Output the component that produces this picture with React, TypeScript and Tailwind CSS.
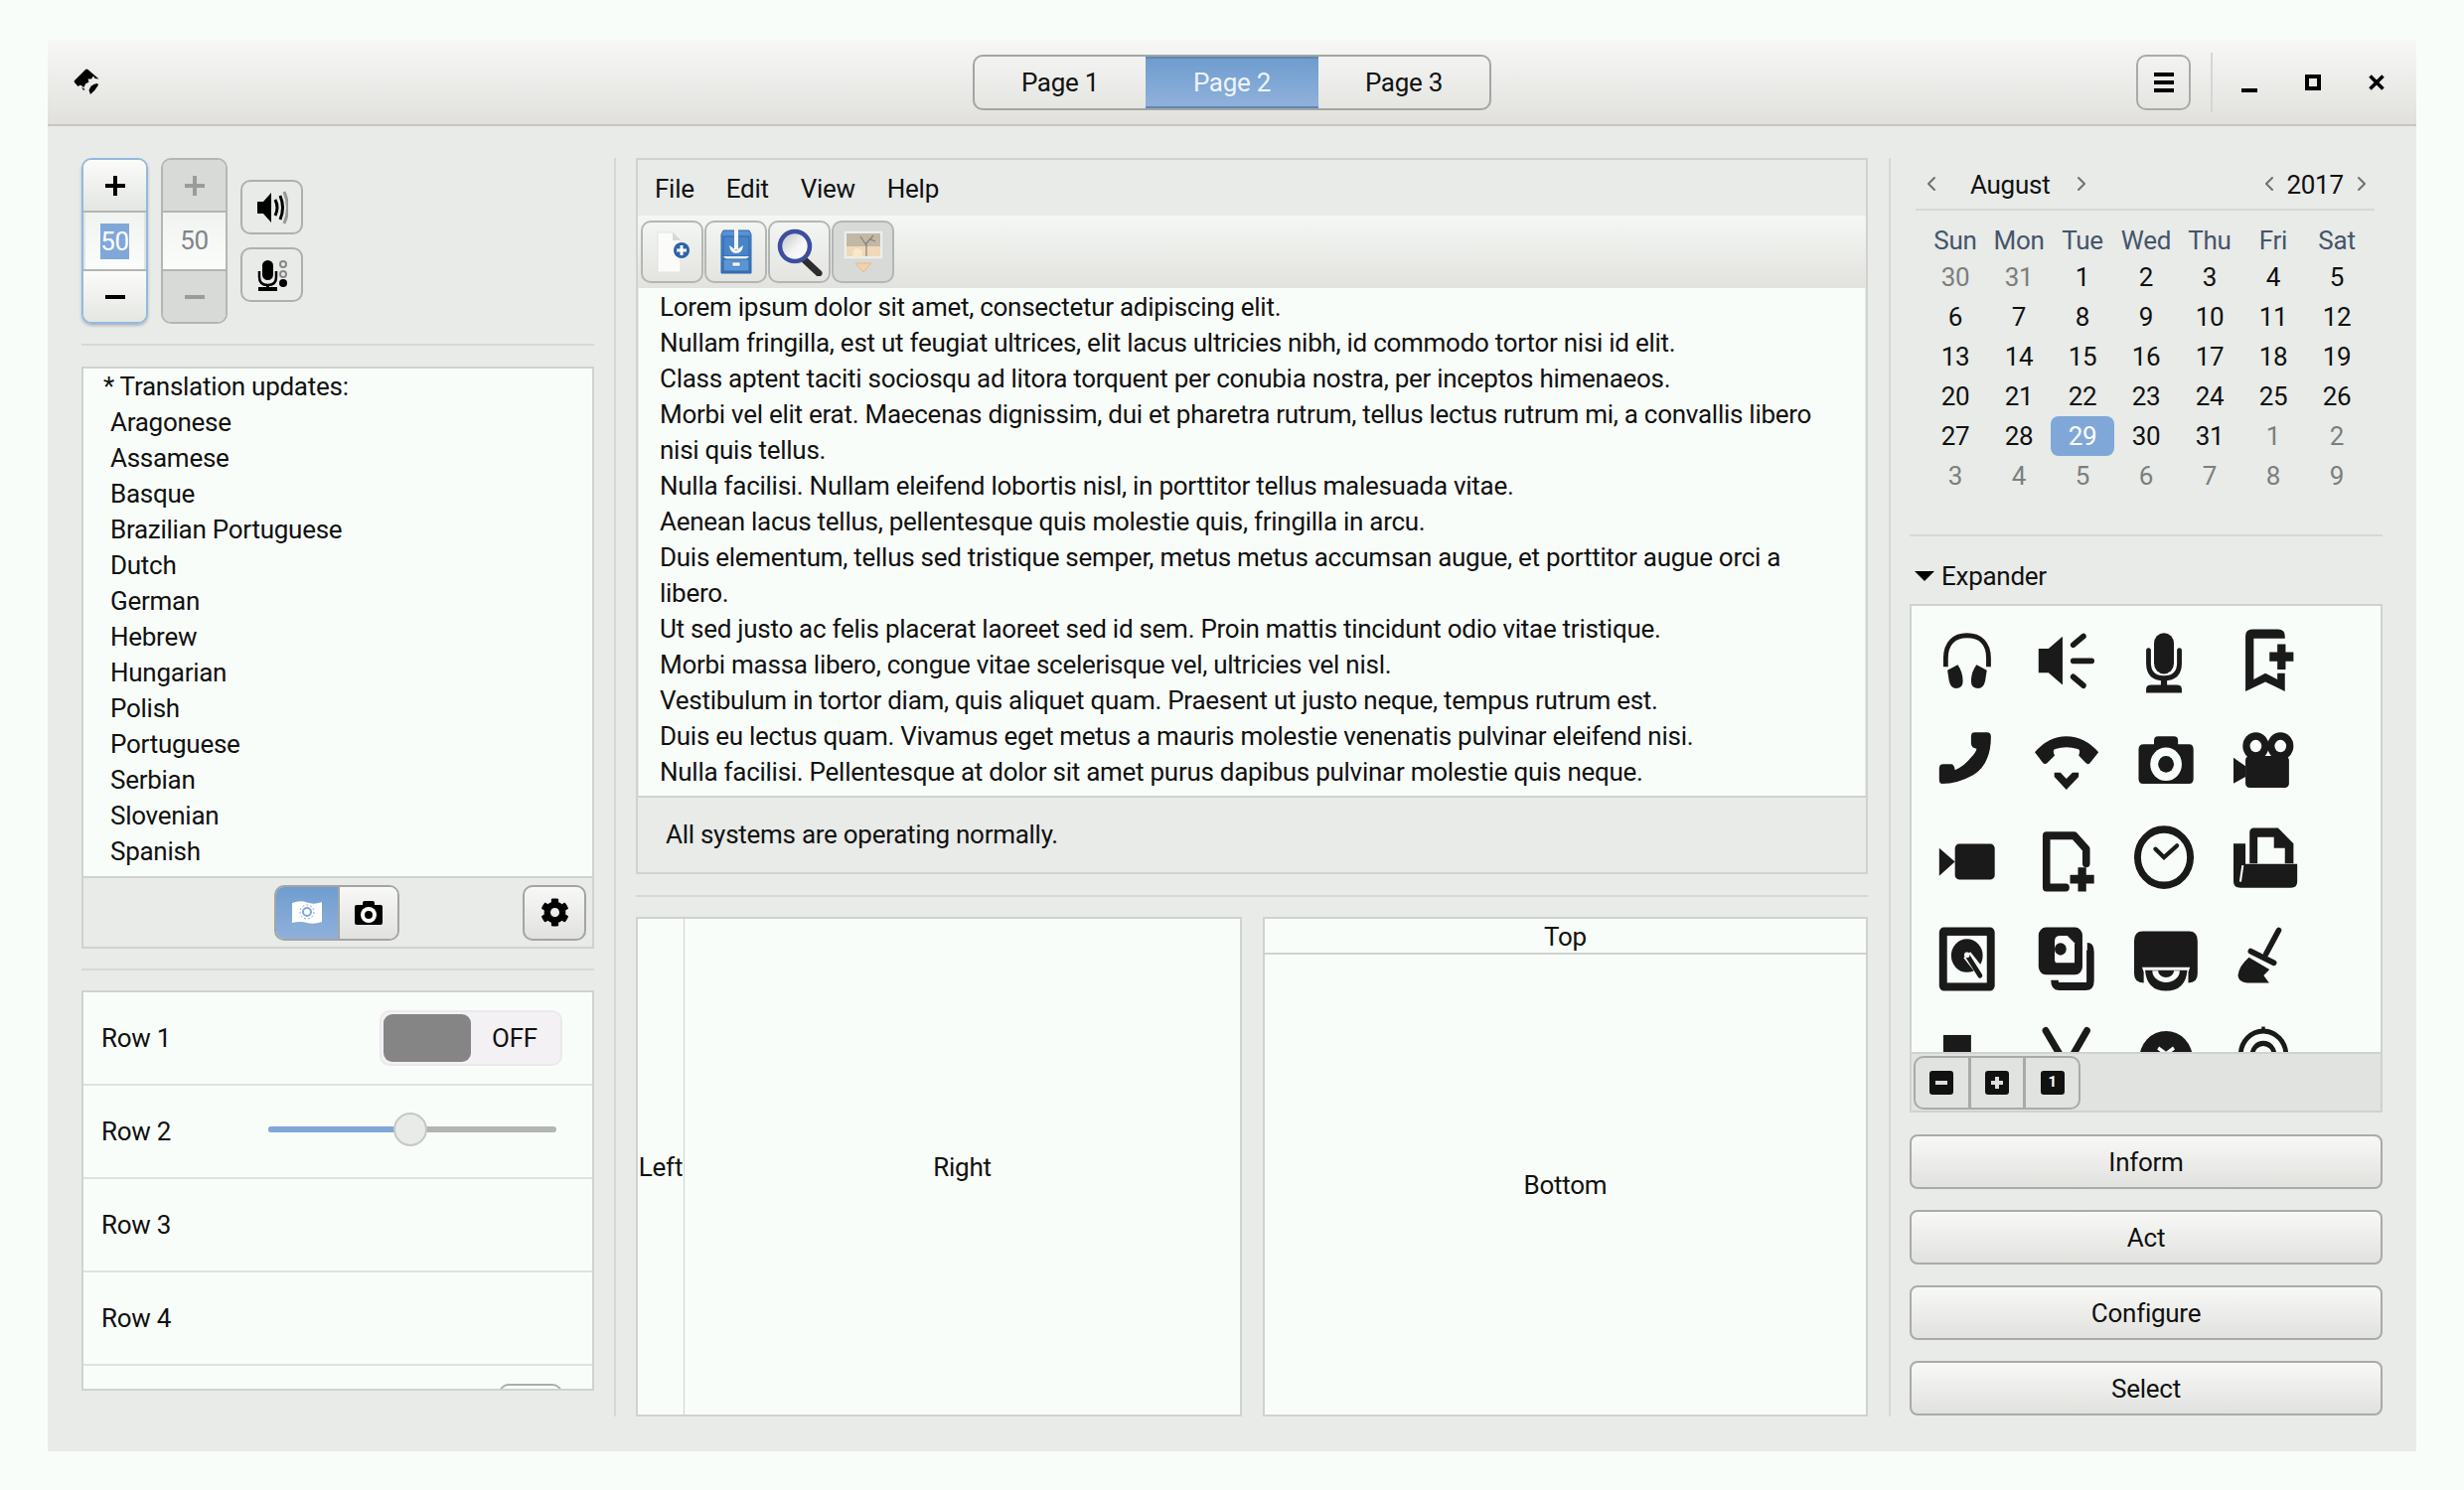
import React from 'react';
import { ChevronLeft, ChevronRight } from 'lucide-react';
import { FaCog } from 'react-icons/fa';

const languages = [
  'Aragonese', 'Assamese', 'Basque', 'Brazilian Portuguese', 'Dutch', 'German', 'Hebrew',
  'Hungarian', 'Polish', 'Portuguese', 'Serbian', 'Slovenian', 'Spanish',
];

const paragraphs = [
  'Lorem ipsum dolor sit amet, consectetur adipiscing elit.',
  'Nullam fringilla, est ut feugiat ultrices, elit lacus ultricies nibh, id commodo tortor nisi id elit.',
  'Class aptent taciti sociosqu ad litora torquent per conubia nostra, per inceptos himenaeos.',
  'Morbi vel elit erat. Maecenas dignissim, dui et pharetra rutrum, tellus lectus rutrum mi, a convallis libero nisi quis tellus.',
  'Nulla facilisi. Nullam eleifend lobortis nisl, in porttitor tellus malesuada vitae.',
  'Aenean lacus tellus, pellentesque quis molestie quis, fringilla in arcu.',
  'Duis elementum, tellus sed tristique semper, metus metus accumsan augue, et porttitor augue orci a libero.',
  'Ut sed justo ac felis placerat laoreet sed id sem. Proin mattis tincidunt odio vitae tristique.',
  'Morbi massa libero, congue vitae scelerisque vel, ultricies vel nisl.',
  'Vestibulum in tortor diam, quis aliquet quam. Praesent ut justo neque, tempus rutrum est.',
  'Duis eu lectus quam. Vivamus eget metus a mauris molestie venenatis pulvinar eleifend nisi.',
  'Nulla facilisi. Pellentesque at dolor sit amet purus dapibus pulvinar molestie quis neque.',
];

const weekdays = ['Sun', 'Mon', 'Tue', 'Wed', 'Thu', 'Fri', 'Sat'];

const days: [string, boolean][] = [
  ['30', true], ['31', true], ['1', false], ['2', false], ['3', false], ['4', false], ['5', false],
  ['6', false], ['7', false], ['8', false], ['9', false], ['10', false], ['11', false], ['12', false],
  ['13', false], ['14', false], ['15', false], ['16', false], ['17', false], ['18', false], ['19', false],
  ['20', false], ['21', false], ['22', false], ['23', false], ['24', false], ['25', false], ['26', false],
  ['27', false], ['28', false], ['29', false], ['30', false], ['31', false], ['1', true], ['2', true],
  ['3', true], ['4', true], ['5', true], ['6', true], ['7', true], ['8', true], ['9', true],
];

const INK = '#1a1a1a';
const PAPER = '#f9fdf9';

// drawn in the coordinates of the icon sheet, each cell is a 200 unit window
const sheet: [number, number, React.ReactNode][] = [
  [140, 200, <>
    <path d="M170 310V287C170 245 195 224 232 224C270 224 295 245 295 287V310" fill="none" stroke={INK} strokeWidth="14" />
    <path d="M175 320L205 305Q220 325 220 350Q220 370 200 370Q185 370 180 350Z" fill={INK} />
    <path d="M290 320L260 305Q244 325 244 350Q244 370 265 370Q280 370 285 350Z" fill={INK} />
  </>],
  [430, 200, <>
    <path d="M441 260H470L511 227V360L470 327H441Z" fill={INK} />
    <path d="M542 250L572 226M542 294H596M542 338L572 362" stroke={INK} strokeWidth="16" strokeLinecap="round" />
  </>],
  [720, 200, <>
    <rect x="778" y="217" width="58" height="113" rx="29" fill={INK} />
    <path d="M762 265V300Q762 342 807 342Q852 342 852 300V265" fill="none" stroke={INK} strokeWidth="14" strokeLinecap="round" />
    <rect x="798" y="342" width="18" height="20" fill={INK} />
    <path d="M755 382V372Q755 360 770 360H844Q859 360 859 372V382Z" fill={INK} />
  </>],
  [1010, 200, <>
    <path d="M1160 240V225Q1160 207 1140 207H1065Q1045 207 1045 225V378L1103 352L1160 378V328H1138V345L1103 328L1069 345V232H1160Z" fill={INK} />
    <path d="M1115 270H1138V248H1162V270H1185V295H1162V318H1138V295H1115Z" fill={INK} />
  </>],
  [140, 475, <path d="M255 492H290Q302 492 302 504Q302 580 250 610Q205 634 160 634Q151 634 151 622V592Q151 580 163 580H185Q195 580 197 596Q225 585 245 560Q260 545 260 537Q244 535 244 522V504Q244 492 255 492Z" fill={INK} />],
  [430, 475, <>
    <path d="M430 547Q470 503 522 503Q575 503 616 547L590 578Q585 582 578 576L558 556Q565 540 555 538Q522 528 490 538Q480 540 488 556L465 578Q458 582 452 574Z" fill={INK} />
    <path d="M487 603H505L522 620L540 603H558V615L522 650L487 615Z" fill={INK} />
  </>],
  [720, 475, <>
    <path d="M733 540Q733 525 748 525H778V515Q778 503 790 503H836Q848 503 848 515V525H880Q893 525 893 540V620Q893 634 880 634H746Q733 634 733 620Z" fill={INK} />
    <circle cx="813" cy="580" r="46" fill={PAPER} />
    <circle cx="813" cy="580" r="23" fill={INK} />
  </>],
  [1010, 475, <>
    <circle cx="1075" cy="530" r="38" fill={INK} />
    <circle cx="1147" cy="530" r="38" fill={INK} />
    <circle cx="1075" cy="530" r="17" fill={PAPER} />
    <circle cx="1147" cy="530" r="17" fill={PAPER} />
    <rect x="1045" y="557" width="127" height="88" rx="12" fill={INK} />
    <path d="M1010 562L1045 585V615L1010 633Z" fill={INK} />
  </>],
  [140, 750, <>
    <rect x="197" y="801" width="116" height="98" rx="12" fill={INK} />
    <path d="M151 812L197 850L151 889Z" fill={INK} />
  </>],
  [430, 750, <>
    <path d="M520 921H464V778H545L580 815V855" fill="none" stroke={INK} strokeWidth="22" strokeLinejoin="round" strokeLinecap="round" />
    <path d="M533 886H556V866H580V886H603V910H580V932H556V910H533Z" fill={INK} />
  </>],
  [720, 750, <>
    <circle cx="807" cy="838" r="77" fill="none" stroke={INK} strokeWidth="20" />
    <path d="M782 815L807 838L845 806" fill="none" stroke={INK} strokeWidth="12" strokeLinecap="round" />
  </>],
  [1010, 750, <>
    <path d="M1057 770Q1057 757 1070 757H1140L1185 800V855H1160V812H1128V782H1080V855H1057Z" fill={INK} />
    <path d="M1010 800H1045V856H1196V905Q1196 922 1178 922H1030Q1010 922 1010 905Z" fill={INK} />
    <path d="M1037 860L1030 905" stroke={PAPER} strokeWidth="6" />
  </>],
  [140, 1025, <>
    <rect x="151" y="1032" width="162" height="175" rx="14" fill={INK} />
    <rect x="174" y="1055" width="116" height="130" fill={PAPER} />
    <circle cx="232" cy="1110" r="46" fill={INK} />
    <path d="M232 1108L280 1165" stroke={PAPER} strokeWidth="26" />
    <path d="M232 1108L270 1165" stroke={INK} strokeWidth="14" strokeLinecap="round" />
    <circle cx="232" cy="1108" r="8" fill={PAPER} />
  </>],
  [430, 1025, <>
    <rect x="441" y="1032" width="128" height="131" rx="22" fill={INK} />
    <path d="M488 1070Q488 1055 505 1055H525L546 1075V1130H495Q488 1130 488 1120Z" fill={PAPER} />
    <circle cx="505" cy="1092" r="17" fill={INK} />
    <path d="M583 1085Q592 1085 592 1100V1180Q592 1195 578 1195H500Q488 1195 488 1178" fill="none" stroke={INK} strokeWidth="22" />
  </>],
  [720, 1025, <>
    <path d="M745 1043H880Q905 1043 905 1070V1160Q905 1185 878 1185V1155L883 1142H743L748 1155V1185Q720 1185 720 1160V1070Q720 1043 745 1043Z" fill={INK} />
    <path d="M752 1150H875Q870 1207 813 1207Q757 1207 752 1150Z" fill={INK} />
    <path d="M773 1152A40 32 0 0 0 853 1152H836A23 18 0 0 1 790 1152Z" fill={PAPER} />
  </>],
  [1010, 1025, <>
    <path d="M1142 1040L1105 1105" stroke={INK} strokeWidth="16" strokeLinecap="round" />
    <path d="M1060 1098L1128 1130" stroke={INK} strokeWidth="16" strokeLinecap="round" />
    <path d="M1055 1115L1115 1148L1098 1165L1114 1185H1050Q1025 1185 1023 1165Q1025 1140 1055 1115Z" fill={INK} />
  </>],
  [140, 1300, <rect x="163" y="1330" width="81" height="100" fill={INK} />],
  [430, 1300, <path d="M462 1318L510 1395M582 1318L535 1395" stroke={INK} strokeWidth="20" strokeLinecap="round" />],
  [720, 1300, <>
    <circle cx="813" cy="1397" r="78" fill={INK} />
    <path d="M790 1366L813 1382L836 1366" fill="none" stroke={PAPER} strokeWidth="10" />
  </>],
  [1010, 1300, <>
    <circle cx="1097" cy="1385" r="66" fill="none" stroke={INK} strokeWidth="14" />
    <circle cx="1097" cy="1385" r="32" fill="none" stroke={INK} strokeWidth="14" />
    <rect x="1092" y="1307" width="10" height="15" fill={INK} />
  </>],
];

const Logo = () => (
  <svg viewBox="0 0 26 27" className="w-[26px] h-[27px]">
    <path d="M12 1Q13 0 14.5 1L25.5 10.5L21.5 10L20 7.5L18 10.5L14.5 10.5L15.5 13.5L12 15.5L10.5 19L7 16.5L4.5 18L1 14Q0 13 1 12Z" fill="#000" />
    <path d="M15.5 22Q17 16 24 15L25 16.5Q22 22 17 26Z" fill="#000" />
    <path d="M8 18.5L11.5 21L10 22Z" fill="#000" />
  </svg>
);

const SpeakerIcon = () => (
  <svg viewBox="0 0 32 34" className="w-[32px] h-[34px]">
    <path d="M1 11H7L15 2V32L7 23H1Z" fill="#000" />
    <path d="M19 9Q23 17 19 25" fill="none" stroke="#000" strokeWidth="3" />
    <path d="M24 5Q29 17 24 29" fill="none" stroke="#000" strokeWidth="3" />
    <path d="M28 1Q35 17 28 33" fill="none" stroke="#999" strokeWidth="3" />
  </svg>
);

const MicIcon = () => (
  <svg viewBox="0 0 32 32" className="w-[32px] h-[32px]">
    <rect x="6" y="1" width="11" height="20" rx="5.5" fill="#000" />
    <path d="M3 12V18Q3 26 11.5 26Q20 26 20 18V12" fill="none" stroke="#000" strokeWidth="2.5" />
    <rect x="10" y="26" width="3" height="3" fill="#000" />
    <rect x="2" y="28" width="19" height="4" fill="#000" />
    <circle cx="27" cy="5" r="3" fill="none" stroke="#888" strokeWidth="2" />
    <circle cx="27" cy="15" r="3" fill="none" stroke="#888" strokeWidth="2" />
    <circle cx="27" cy="24" r="4" fill="#000" />
  </svg>
);

const SmallCamera = () => (
  <svg viewBox="0 0 28 24" className="w-[28px] h-[24px]">
    <path d="M0 6Q0 4 2 4H8V2Q8 0 10 0H18Q20 0 20 2V4H26Q28 4 28 6V22Q28 24 26 24H2Q0 24 0 22Z" fill="#000" />
    <circle cx="14" cy="14" r="8" fill="#fff" />
    <circle cx="14" cy="14" r="4" fill="#000" />
  </svg>
);

const FlagIcon = () => (
  <svg viewBox="0 0 30 24" className="w-[30px] h-[24px]">
    <path d="M0 2Q8 -1 15 1.5T30 1V21Q22 24 15 22T0 22Z" fill="#fff" />
    <circle cx="15" cy="11" r="4" fill="none" stroke="#7fa8d9" strokeWidth="2" />
    <circle cx="15" cy="11" r="7" fill="none" stroke="#7fa8d9" strokeWidth="1" strokeDasharray="2 2" />
  </svg>
);

const NewDocIcon = () => (
  <svg viewBox="0 0 40 44" className="w-[40px] h-[44px]">
    <path d="M5 2H20L28 10V42H5Z" fill="#fbfcfa" stroke="#e2e3e0" />
    <path d="M20 2V10H28Z" fill="#d6d8d6" />
    <circle cx="29" cy="20" r="8" fill="#2f62a6" />
    <path d="M29 15V25M24 20H34" stroke="#fff" strokeWidth="3" />
  </svg>
);

const CabinetIcon = () => (
  <svg viewBox="0 0 34 46" className="w-[34px] h-[46px]">
    <defs>
      <linearGradient id="cab" x1="0" y1="0" x2="0" y2="1">
        <stop offset="0" stopColor="#5b93d3" />
        <stop offset="1" stopColor="#3a76bd" />
      </linearGradient>
    </defs>
    <path d="M4 1H30L32 5V44H2V5Z" fill="url(#cab)" stroke="#2f66a8" />
    <rect x="4" y="7" width="26" height="20" fill="#4a84c8" stroke="#2f66a8" />
    <path d="M4 27H30L27 30H7Z" fill="#e8edf3" />
    <rect x="4" y="30" width="26" height="12" fill="#5c95d4" stroke="#2f66a8" />
    <rect x="13" y="33" width="8" height="4" fill="#eef3f8" stroke="#2f66a8" strokeWidth="0.5" />
    <path d="M17 0V20" stroke="#f4f6f4" strokeWidth="4" />
    <path d="M10 16Q11 24 17 24Q23 24 24 16L17 21Z" fill="#f4f6f4" />
  </svg>
);

const SearchIcon = () => (
  <svg viewBox="0 0 48 48" className="w-[48px] h-[48px]">
    <defs>
      <linearGradient id="lens" x1="0" y1="0" x2="1" y2="1">
        <stop offset="0" stopColor="#b9bcc0" />
        <stop offset="0.55" stopColor="#f4f6f6" />
        <stop offset="1" stopColor="#ffffff" />
      </linearGradient>
    </defs>
    <path d="M28 31L43 45" stroke="#2e2e30" strokeWidth="7" strokeLinecap="round" />
    <circle cx="19" cy="18" r="15" fill="url(#lens)" stroke="#3d4ea0" strokeWidth="4.5" />
  </svg>
);

const PictureIcon = () => (
  <svg viewBox="0 0 42 46" className="w-[42px] h-[46px]">
    <rect x="1" y="1" width="40" height="29" rx="1" fill="#eceeeb" stroke="#d2d4d1" />
    <rect x="4" y="4" width="34" height="23" fill="#c3b7a6" />
    <path d="M4 17H38V27H4Z" fill="#efd9b9" />
    <circle cx="15" cy="24" r="5" fill="#f8e8c9" />
    <path d="M24 27V13M24 16L18 7M24 14L31 6M28 10L33 12" fill="none" stroke="#85807a" strokeWidth="1.2" />
    <path d="M13 34H29L21 43Z" fill="#f2d2aa" stroke="#e7b98a" />
  </svg>
);

const Hr = ({ className = '' }: { className?: string }) => (
  <div className={`h-[2px] bg-[#d5d8d5] ${className}`} />
);

const VSep = () => <div className="w-[2px] h-[1267px] bg-[#d5d8d5]" />;

const Spin = ({ active }: { active: boolean }) => {
  const edge = active ? 'border-[#95b8de]' : 'border-[#b4b6b4]';
  const btn = active
    ? 'bg-linear-to-b from-[#fbfcfa] to-[#e4e6e2] text-black'
    : 'bg-[#d8dad8] text-[#9a9c9a]';
  return (
    <div className={`w-[67px] h-[167px] flex flex-col rounded-[10px] border-2 overflow-hidden ${edge} ${active ? 'shadow-[0_2px_3px_rgba(60,90,130,0.35)]' : ''}`}>
      <div className={`h-[53px] flex items-center justify-center border-b-2 border-[#b4b6b4] ${btn}`}>
        <svg viewBox="0 0 20 20" className="w-[20px] h-[20px]"><path d="M8 0H12V8H20V12H12V20H8V12H0V8H8Z" fill="currentColor" /></svg>
      </div>
      <div className={`flex-1 flex items-center justify-center bg-linear-to-b from-[#f1f3f0] to-[#fbfdfb] ${active ? 'border-x-2 border-[#e2e4e2]' : 'text-[#80858a]'}`}>
        {active ? <span className="bg-[#7fa8d9] text-white h-[36px] leading-[36px]">50</span> : <span>50</span>}
      </div>
      <div className={`h-[53px] flex items-center justify-center border-t-2 border-[#b4b6b4] ${btn}`}>
        <div className="w-[20px] h-[4px] bg-current" />
      </div>
    </div>
  );
};

const IconButton = ({ children }: { children: React.ReactNode }) => (
  <div className="w-[63px] h-[55px] flex items-center justify-center rounded-[10px] border-2 border-[#aeb0ae] bg-[#e8ebe8]">
    {children}
  </div>
);

const ToolButton = ({ children, disabled }: { children: React.ReactNode; disabled?: boolean }) => (
  <div className={`w-[63px] h-[63px] flex items-center justify-center rounded-[10px] border-2 border-[#b4b6b4] ${disabled ? 'bg-[#d8dad7]' : ''}`}>
    {children}
  </div>
);

const PageTab = ({ label, active }: { label: string; active?: boolean }) => (
  <div className={`h-full flex items-center justify-center pt-[1px] ${active ? 'w-[174px] bg-linear-to-b from-[#6f9dcf] to-[#8fb1da] border-y-2 border-[#5f87b5] text-[#eef4fb]' : 'w-[172px]'}`}>
    {label}
  </div>
);

const Row = ({ label, children }: { label: string; children?: React.ReactNode }) => (
  <div className="h-[94px] shrink-0 flex items-center justify-between pl-[18px] border-b-2 border-[#dfe2df]">
    <span>{label}</span>
    {children}
  </div>
);

const WideButton = ({ label }: { label: string }) => (
  <div className="h-[55px] flex items-center justify-center pt-[1px] rounded-[8px] border-2 border-[#a9aba9] bg-linear-to-b from-[#f8f9f7] to-[#e1e2de]">
    {label}
  </div>
);

const BoxGlyph = ({ children }: { children: React.ReactNode }) => (
  <div className="w-[24px] h-[24px] rounded-[3px] bg-[#111] flex items-center justify-center text-white">
    {children}
  </div>
);

const App: React.FC = () => {
  return (
    <div className="w-[2480px] h-[1500px] bg-[#f9fdf9] pt-[40px] pl-[48px] font-[Roboto,sans-serif] text-[26px] text-[#111] tracking-[-0.27px] overflow-hidden">
      <div className="w-[2384px] h-[1421px] bg-[#e8ebe8] flex flex-col">
        {/* title bar */}
        <header className="h-[87px] shrink-0 grid grid-cols-[1fr_auto_1fr] items-center border-b-2 border-[#c9c6c2] bg-linear-to-b from-[#f7f7f6] via-[#ecedea] to-[#e1e0dc]">
          <div className="pl-[26px]"><Logo /></div>
          <div className="w-[522px] h-[56px] flex rounded-[10px] border-2 border-[#a3a5a3] overflow-hidden">
            <PageTab label="Page 1" />
            <PageTab label="Page 2" active />
            <PageTab label="Page 3" />
          </div>
          <div className="flex items-center justify-end pr-[32px]">
            <div className="w-[55px] h-[56px] flex items-center justify-center rounded-[10px] border-2 border-[#a9aba9]">
              <div className="w-[20px] flex flex-col gap-[4px]">
                <div className="h-[4px] bg-black" />
                <div className="h-[4px] bg-black" />
                <div className="h-[4px] bg-black" />
              </div>
            </div>
            <div className="w-[2px] h-[60px] bg-[#d5d6d3] ml-[20px] mr-[29px]" />
            <div className="w-[16px] h-[4px] bg-black mt-[16px]" />
            <div className="w-[16px] h-[16px] border-[4px] border-black ml-[48px]" />
            <svg viewBox="0 0 16 16" className="w-[16px] h-[16px] ml-[48px]"><path d="M1.5 1.5L14.5 14.5M14.5 1.5L1.5 14.5" stroke="#000" strokeWidth="3.6" /></svg>
          </div>
        </header>

        <main className="flex pt-[32px] pl-[34px]">
          {/* left column */}
          <section className="w-[516px] flex flex-col">
            <div className="h-[167px] flex gap-[13px] items-start">
              <Spin active />
              <Spin active={false} />
              <div className="flex flex-col gap-[13px] pt-[22px]">
                <IconButton><SpeakerIcon /></IconButton>
                <IconButton><MicIcon /></IconButton>
              </div>
            </div>
            <Hr className="mt-[20px]" />
            <div className="mt-[21px] h-[586px] flex flex-col border-2 border-[#cfd2cf]">
              <div className="flex-1 bg-[#f9fdf9] leading-[36px] overflow-hidden">
                <div className="pl-[20px]">* Translation updates:</div>
                {languages.map((l) => <div key={l} className="pl-[27px]">{l}</div>)}
              </div>
              <div className="h-[71px] shrink-0 flex items-center border-t-2 border-[#cfd2cf] bg-[#e8ebe8] pl-[192px]">
                <div className="w-[126px] h-[56px] flex rounded-[10px] border-2 border-[#a3a5a3] overflow-hidden">
                  <div className="w-[62px] flex items-center justify-center bg-linear-to-b from-[#6f9dcf] to-[#8fb1da]"><FlagIcon /></div>
                  <div className="flex-1 flex items-center justify-center border-l-2 border-[#a3a5a3] bg-linear-to-b from-[#f8f9f7] to-[#e1e2de]"><SmallCamera /></div>
                </div>
                <div className="w-[64px] h-[56px] ml-[124px] flex items-center justify-center rounded-[10px] border-2 border-[#a3a5a3] bg-linear-to-b from-[#f8f9f7] to-[#e1e2de]">
                  <FaCog className="w-[29px] h-[29px] text-black" />
                </div>
              </div>
            </div>
            <Hr className="mt-[20px]" />
            <div className="mt-[20px] h-[403px] bg-[#f9fdf9] border-2 border-[#cfd2cf] flex flex-col overflow-hidden">
              <Row label="Row 1">
                <div className="w-[184px] h-[56px] mr-[30px] flex items-center rounded-[10px] border-2 border-[#ece8ec] bg-[#f3f1f3] p-[2px]">
                  <div className="w-[88px] h-[48px] rounded-[9px] bg-[#858585]" />
                  <span className="flex-1 text-center">OFF</span>
                </div>
              </Row>
              <Row label="Row 2">
                <div className="relative w-[290px] h-[6px] mr-[36px] rounded-full bg-[#b3b5b2] -mt-[4px]">
                  <div className="w-[143px] h-full rounded-full bg-[#7fa8d9]" />
                  <div className="absolute left-[126px] top-[-14px] w-[34px] h-[34px] rounded-full bg-[#e8ebe8] border-2 border-[#c6c8c6]" />
                </div>
              </Row>
              <Row label="Row 3" />
              <Row label="Row 4" />
              <div className="flex justify-end pr-[30px] pt-[18px]">
                <div className="w-[64px] h-[40px] rounded-[10px] border-2 border-[#a9aba9]" />
              </div>
            </div>
          </section>

          <div className="ml-[20px]"><VSep /></div>

          {/* center column */}
          <section className="ml-[20px] w-[1240px] flex flex-col">
            <div className="h-[721px] flex flex-col border-2 border-[#cfd2cf]">
              <nav className="h-[56px] shrink-0 flex items-center gap-[32px] pl-[17px] pt-[2px]">
                <span>File</span><span>Edit</span><span>View</span><span>Help</span>
              </nav>
              <div className="h-[73px] shrink-0 flex items-center gap-[1px] pl-[3px] bg-linear-to-b from-[#f5f7f4] to-[#e2e3df]">
                <ToolButton><NewDocIcon /></ToolButton>
                <ToolButton><CabinetIcon /></ToolButton>
                <ToolButton><SearchIcon /></ToolButton>
                <ToolButton disabled><PictureIcon /></ToolButton>
              </div>
              <div className="h-[511px] shrink-0 bg-[#f9fdf9] pl-[21px] pr-[44px] mx-[1px] pt-[1px] leading-[36px] overflow-hidden">
                {paragraphs.map((p) => <p key={p}>{p}</p>)}
              </div>
              <div className="flex-1 flex items-center pl-[28px] border-t-2 border-[#cfd2cf]">
                All systems are operating normally.
              </div>
            </div>
            <Hr className="mt-[21px]" />
            <div className="mt-[20px] h-[503px] flex gap-[21px]">
              <div className="w-[610px] flex bg-[#f9fdf9] border-2 border-[#cfd2cf]">
                <div className="w-[47px] flex items-center justify-center pt-[2px] border-r border-[#cfd2cf]">Left</div>
                <div className="flex-1 flex items-center justify-center pt-[2px]">Right</div>
              </div>
              <div className="w-[609px] flex flex-col bg-[#f9fdf9] border-2 border-[#cfd2cf]">
                <div className="h-[36px] flex items-center justify-center pt-[2px] border-b-2 border-[#cfd2cf]">Top</div>
                <div className="flex-1 flex items-center justify-center pt-[2px]">Bottom</div>
              </div>
            </div>
          </section>

          <div className="ml-[21px]"><VSep /></div>

          {/* right column */}
          <section className="ml-[19px] w-[476px] flex flex-col">
            <div className="h-[55px] flex items-center pl-[6px] pr-[8px] pb-[2px]">
              <div className="w-full h-full flex items-center pt-[3px] border-b-2 border-[#d5d8d5] text-[#6e726f]">
                <ChevronLeft className="w-[24px] h-[28px] ml-[4px] -mt-[2px]" />
                <span className="ml-[27px] text-[#111]">August</span>
                <ChevronRight className="w-[24px] h-[28px] ml-[20px] -mt-[2px]" />
                <ChevronLeft className="w-[24px] h-[28px] ml-[165px] -mt-[2px]" />
                <span className="ml-[5px] text-[#111]">2017</span>
                <ChevronRight className="w-[24px] h-[28px] ml-[6px] -mt-[2px]" />
              </div>
            </div>
            <div className="pl-[14px] pt-[9px]">
              <div className="grid grid-cols-[repeat(7,64px)] h-[36px] items-center text-center text-[#46556a]">
                {weekdays.map((d) => <span key={d}>{d}</span>)}
              </div>
              <div className="grid grid-cols-[repeat(7,64px)] auto-rows-[40px]">
                {days.map(([d, muted], i) => (
                  <div
                    key={i}
                    className={`flex items-center justify-center ${i === 30 ? 'bg-[#7fa8d9] text-white rounded-[8px]' : muted ? 'text-[#7c7f7d]' : ''}`}
                  >
                    {d}
                  </div>
                ))}
              </div>
            </div>
            <Hr className="mt-[39px]" />
            <div className="h-[68px] flex items-center gap-[7px] pl-[5px] pt-[12px]">
              <div className="w-0 h-0 border-x-[10px] border-x-transparent border-t-[10px] border-t-black" />
              <span>Expander</span>
            </div>
            <div className="h-[512px] flex flex-col border-2 border-[#cfd2cf]">
              <div className="h-[449px] shrink-0 bg-[#f9fdf9] overflow-hidden pl-[24px] pt-[21px]">
                <div className="grid grid-cols-[repeat(4,100px)] auto-rows-[100px]">
                  {sheet.map(([x, y, art], i) => (
                    <svg key={i} viewBox={`${x} ${y} 200 200`} preserveAspectRatio="none" className="w-[69px] h-[73px] overflow-visible">
                      {art}
                    </svg>
                  ))}
                </div>
              </div>
              <div className="flex-1 flex items-center pl-[2px] border-t-2 border-[#cfd2cf] bg-[#e0e3e0]">
                <div className="w-[168px] h-[54px] flex rounded-[10px] border-2 border-[#a9aba9] overflow-hidden">
                  <div className="flex-1 flex items-center justify-center border-r-[3px] border-[#a9aba9]">
                    <BoxGlyph><div className="w-[12px] h-[4px] bg-[#ddd]" /></BoxGlyph>
                  </div>
                  <div className="flex-1 flex items-center justify-center border-r-[3px] border-[#a9aba9]">
                    <BoxGlyph><svg viewBox="0 0 12 12" className="w-[12px] h-[12px]"><path d="M4 0H8V4H12V8H8V12H4V8H0V4H4Z" fill="#ddd" /></svg></BoxGlyph>
                  </div>
                  <div className="flex-1 flex items-center justify-center">
                    <BoxGlyph><span className="text-[15px] font-bold leading-none">1</span></BoxGlyph>
                  </div>
                </div>
              </div>
            </div>
            <div className="mt-[22px] flex flex-col gap-[21px]">
              <WideButton label="Inform" />
              <WideButton label="Act" />
              <WideButton label="Configure" />
              <WideButton label="Select" />
            </div>
          </section>
        </main>
      </div>
    </div>
  );
};

export default App;
